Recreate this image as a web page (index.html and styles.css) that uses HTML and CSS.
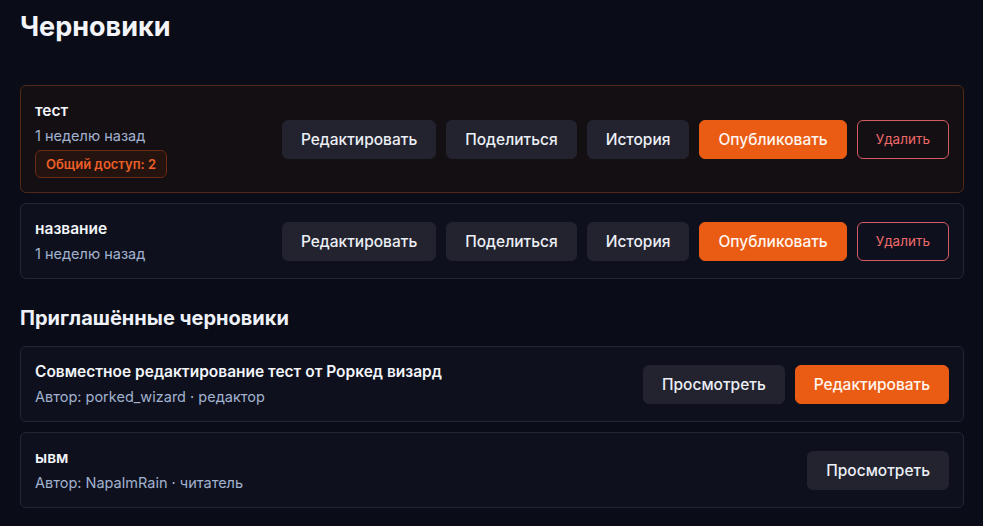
FILE: index.html
```html
<!DOCTYPE html>
<html lang="ru">
<head>
    <meta charset="UTF-8">
    <meta name="viewport" content="width=device-width, initial-scale=1.0">
    <title>Черновики</title>
    <link rel="stylesheet" href="styles.css">
</head>
<body>

    <div class="page">
        <div class="page-head">
            <h1>Черновики</h1>
        </div>

        <div class="draft-list">
            <div class="draft-card shared">
                <div class="draft-info">
                    <div class="draft-title">тест</div>
                    <div class="draft-meta">1 неделю назад</div>
                    <span class="badge">Общий доступ: 2</span>
                </div>
                <div class="draft-actions">
                    <button class="btn">Редактировать</button>
                    <button class="btn">Поделиться</button>
                    <button class="btn">История</button>
                    <button class="btn btn-primary">Опубликовать</button>
                    <button class="btn btn-danger">Удалить</button>
                </div>
            </div>

            <div class="draft-card">
                <div class="draft-info">
                    <div class="draft-title">название</div>
                    <div class="draft-meta">1 неделю назад</div>
                </div>
                <div class="draft-actions">
                    <button class="btn">Редактировать</button>
                    <button class="btn">Поделиться</button>
                    <button class="btn">История</button>
                    <button class="btn btn-primary">Опубликовать</button>
                    <button class="btn btn-danger">Удалить</button>
                </div>
            </div>
        </div>

        <h2>Приглашённые черновики</h2>

        <div class="draft-list">
            <div class="draft-card">
                <div class="draft-info">
                    <div class="draft-title">Совместное редактирование тест от Роркед визард</div>
                    <div class="draft-meta">Автор: porked_wizard · редактор</div>
                </div>
                <div class="draft-actions">
                    <button class="btn">Просмотреть</button>
                    <button class="btn btn-primary">Редактировать</button>
                </div>
            </div>

            <div class="draft-card">
                <div class="draft-info">
                    <div class="draft-title">ывм</div>
                    <div class="draft-meta">Автор: NapalmRain · читатель</div>
                </div>
                <div class="draft-actions">
                    <button class="btn">Просмотреть</button>
                </div>
            </div>
        </div>
    </div>

</body>
</html>
```

FILE: styles.css
```css
/* General Styles */
body {
    font-family: 'Inter', 'Noto Sans', sans-serif;
    background: #0a0d17;
    color: #f1f3f8;
    margin: 0;
    padding: 0;
}

.page {
    padding: 11px 19px 20px 20px;
}

.page-head {
    margin-bottom: 42px;
}

h1 {
    margin: 0;
    font-size: 27px;
    line-height: 32px;
    font-weight: 700;
    color: #f3f5fa;
}

h2 {
    margin: 25px 0 14px;
    font-size: 20px;
    line-height: 28px;
    font-weight: 700;
    color: #eef1f7;
}

/* Draft cards */
.draft-list {
    display: flex;
    flex-direction: column;
    gap: 10px;
}

.draft-card {
    display: flex;
    align-items: center;
    justify-content: space-between;
    gap: 16px;
    padding: 14px;
    background: #0e111d;
    border: 1px solid #222738;
    border-radius: 6px;
}

.draft-card.shared {
    background: #130f13;
    border-color: #4f2818;
}

.draft-info {
    display: flex;
    flex-direction: column;
    align-items: flex-start;
    min-width: 0;
}

.draft-title {
    font-size: 15.5px;
    line-height: 22px;
    font-weight: 600;
    color: #f3f5fa;
}

.draft-meta {
    margin-top: 4px;
    font-size: 14.5px;
    line-height: 20px;
    color: #a2b2cf;
}

.badge {
    margin-top: 4px;
    padding: 0 10px;
    height: 28px;
    line-height: 26px;
    box-sizing: border-box;
    font-size: 13px;
    font-weight: 600;
    color: #ec5f27;
    background: #24130f;
    border: 1px solid #6b2b12;
    border-radius: 6px;
}

/* Buttons */
.draft-actions {
    display: flex;
    gap: 10px;
    flex-shrink: 0;
}

.btn {
    font-family: inherit;
    font-size: 15.5px;
    font-weight: 500;
    line-height: 21px;
    padding: 8px 18px;
    color: #eceff5;
    background: #22232f;
    border: 1px solid #22232f;
    border-radius: 6px;
    cursor: pointer;
}

.btn-primary {
    background: #ea5c13;
    border-color: #ea5c13;
    color: #fff6f0;
}

.btn-danger {
    background: transparent;
    border-color: #d55a63;
    color: #f06a6a;
    font-size: 13.5px;
    font-weight: 400;
}
```
